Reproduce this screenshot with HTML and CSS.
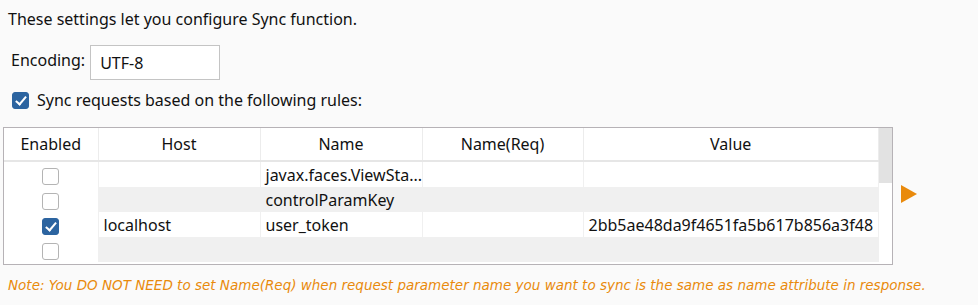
FILE: index.html
```html
<!DOCTYPE html>
<html lang="en">
<head>
    <meta charset="UTF-8">
    <title>Sync Settings</title>
    <link rel="stylesheet" href="styles.css">
</head>
<body>
    <p class="intro">These settings let you configure Sync function.</p>
    <div class="encoding">
        <label for="enc">Encoding:</label>
        <input type="text" id="enc" value="UTF-8">
    </div>
    <div class="sync-toggle">
        <span class="check on"></span>
        <span>Sync requests based on the following rules:</span>
    </div>

    <div class="rules">
        <div class="grid">
            <table>
                <colgroup>
                    <col class="c-enabled">
                    <col class="c-host">
                    <col class="c-name">
                    <col class="c-req">
                    <col>
                </colgroup>
                <thead>
                    <tr>
                        <th>Enabled</th>
                        <th>Host</th>
                        <th>Name</th>
                        <th>Name(Req)</th>
                        <th>Value</th>
                    </tr>
                </thead>
                <tbody>
                    <tr>
                        <td class="cell-check"><span class="check"></span></td>
                        <td></td>
                        <td>javax.faces.ViewSta...</td>
                        <td></td>
                        <td></td>
                    </tr>
                    <tr class="alt">
                        <td class="cell-check"><span class="check"></span></td>
                        <td></td>
                        <td>controlParamKey</td>
                        <td></td>
                        <td></td>
                    </tr>
                    <tr>
                        <td class="cell-check"><span class="check on"></span></td>
                        <td>localhost</td>
                        <td>user_token</td>
                        <td></td>
                        <td>2bb5ae48da9f4651fa5b617b856a3f48</td>
                    </tr>
                    <tr class="alt">
                        <td class="cell-check"><span class="check"></span></td>
                        <td></td>
                        <td></td>
                        <td></td>
                        <td></td>
                    </tr>
                </tbody>
            </table>
            <div class="scrollbar"><div class="thumb"></div></div>
        </div>
        <div class="arrow"></div>
    </div>

    <p class="note">Note: You DO NOT NEED to set Name(Req) when request parameter name you want to sync is the same as name attribute in response.</p>
</body>
</html>
```

FILE: styles.css
```css
body {
    margin: 0;
    background: #fafafa;
    color: #111;
    font-family: "Noto Sans", sans-serif;
    font-size: 16px;
}
.intro {
    margin: 0;
    padding: 7px 0 0 8px;
    line-height: 24px;
}
.encoding {
    display: flex;
    align-items: center;
    gap: 5px;
    margin: 14px 0 0 11px;
}
.encoding label {
    margin-top: -6px;
}
.encoding input {
    width: 130px;
    height: 35px;
    box-sizing: border-box;
    border: 1px solid #c4c4c4;
    background: #fff;
    padding: 0 9px;
    font: inherit;
    color: #111;
}
.sync-toggle {
    display: flex;
    align-items: center;
    gap: 8px;
    margin: 9px 0 0 12px;
}
.check {
    display: inline-block;
    width: 17px;
    height: 17px;
    box-sizing: border-box;
    border: 1px solid #b4b4b4;
    border-radius: 3px;
    background: #fff;
    vertical-align: middle;
    position: relative;
}
.check.on {
    background: #2c64a0;
    border-color: #2c64a0;
}
.check.on::after {
    content: "";
    position: absolute;
    left: 5px;
    top: 1px;
    width: 4px;
    height: 9px;
    border: solid #fff;
    border-width: 0 2px 2px 0;
    transform: rotate(40deg);
}
.rules {
    display: flex;
    align-items: flex-start;
    margin: 16px 0 0 3px;
}
.grid {
    display: flex;
    border: 1px solid #b6b2b6;
    background: #fff;
    padding-bottom: 2px;
}
table {
    border-collapse: collapse;
    width: 875px;
    table-layout: fixed;
}
.c-enabled { width: 94px; }
.c-host { width: 162px; }
.c-name { width: 162px; }
.c-req { width: 161px; }
th {
    font-weight: normal;
    height: 32px;
    padding: 0;
    border-right: 1px solid #ececec;
    border-bottom: 2px solid #e6e6e6;
    text-align: center;
}
td {
    height: 25px;
    padding: 0 0 0 5px;
    border-right: 1px solid #f0f0f0;
    white-space: nowrap;
    overflow: hidden;
}
tr.alt td {
    background: #f0f0f0;
}
td.cell-check,
tr.alt td.cell-check {
    background: #fff;
    text-align: center;
    padding: 0;
}
.scrollbar {
    width: 13px;
    background: #fff;
}
.thumb {
    height: 55px;
    background: #e2e2e2;
}
.arrow {
    width: 0;
    height: 0;
    margin: 58px 0 0 8px;
    border-top: 9px solid transparent;
    border-bottom: 9px solid transparent;
    border-left: 16px solid #e98a0c;
}
.note {
    margin: 12px 0 0 8px;
    color: #e98a0c;
    font-family: "DejaVu Sans", sans-serif;
    font-style: italic;
    font-size: 13.5px;
}
```
